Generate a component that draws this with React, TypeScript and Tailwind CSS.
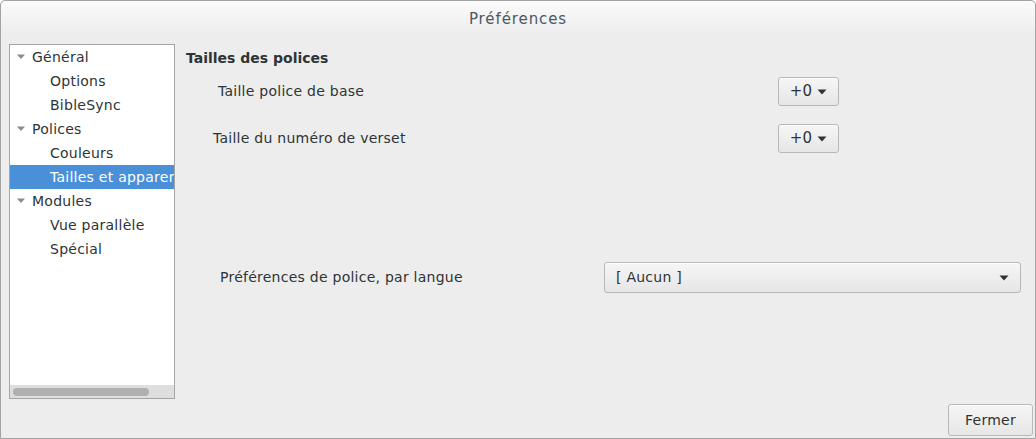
import React from "react";

const Caret = ({ className = "" }: { className?: string }) => (
  <svg width="10" height="6" viewBox="0 0 10 6" className={className}>
    <path d="M0.5 0.5 L9.5 0.5 L5 5.5 Z" fill="#2e3436" />
  </svg>
);

const Expander = () => (
  <svg width="10" height="6" viewBox="0 0 10 6" className="shrink-0">
    <path d="M1 0.5 L9 0.5 L5 5 Z" fill="#8a8a8a" />
  </svg>
);

const TreeParent = ({ label }: { label: string }) => (
  <div className="h-[24px] flex items-center pl-[6px] gap-[6px] text-[#2e3436]">
    <Expander />
    <span>{label}</span>
  </div>
);

const TreeChild = ({ label, selected = false }: { label: string; selected?: boolean }) => (
  <div
    className={
      "h-[24px] flex items-center pl-[40px] whitespace-nowrap " +
      (selected ? "bg-[#4a90d9] text-white" : "text-[#2e3436]")
    }
  >
    {label}
  </div>
);

const SmallButton = () => (
  <div className="w-[61px] h-[29px] rounded-[3px] border border-[#b8b8b8] bg-gradient-to-b from-[#f6f6f6] to-[#e6e6e6] flex items-center justify-center gap-[5px] text-[#2e3436] text-[15px] shadow-[inset_0_1px_0_#ffffff]">
    <span>+0</span>
    <Caret />
  </div>
);

export default function App() {
  return (
    <div
      className="w-[1036px] h-[439px] bg-[#ededed] border border-[#a3a3a3] rounded-t-[5px] flex flex-col overflow-hidden text-[14px] tracking-[0.25px]"
      style={{ fontFamily: '"DejaVu Sans", sans-serif' }}
    >
      <div className="h-[36px] shrink-0 bg-gradient-to-b from-[#fbfbfb] to-[#ececec] rounded-t-[5px] flex items-center justify-center">
        <span className="text-[#4b5961] text-[15px] tracking-[0.9px]">Préférences</span>
      </div>
      <div className="flex pt-[7px] pl-[8px] h-[362px] shrink-0">
        <div className="w-[166px] h-[355px] shrink-0 border border-[#a5a5a5] bg-white flex flex-col overflow-hidden">
          <div className="flex-1 overflow-hidden">
            <TreeParent label="Général" />
            <TreeChild label="Options" />
            <TreeChild label="BibleSync" />
            <TreeParent label="Polices" />
            <TreeChild label="Couleurs" />
            <TreeChild label="Tailles et apparence" selected />
            <TreeParent label="Modules" />
            <TreeChild label="Vue parallèle" />
            <TreeChild label="Spécial" />
          </div>
          <div className="h-[13px] bg-[#dedede] flex items-center pl-[3px]">
            <div className="w-[136px] h-[8px] rounded-full bg-[#b0b0b0]" />
          </div>
        </div>
        <div className="flex flex-col pl-[11px] flex-1">
          <div className="h-[28px] flex items-center font-bold text-[#2e3436] tracking-normal">Tailles des polices</div>
          <div className="mt-[5px] h-[29px] flex items-center">
            <div className="w-[592px] pl-[32px] text-[#2e3436]">Taille police de base</div>
            <SmallButton />
          </div>
          <div className="mt-[18px] h-[29px] flex items-center">
            <div className="w-[592px] pl-[27px] text-[#2e3436]">Taille du numéro de verset</div>
            <SmallButton />
          </div>
          <div className="mt-[109px] h-[31px] flex items-center">
            <div className="w-[418px] pl-[34px] text-[#2e3436]">Préférences de police, par langue</div>
            <div className="w-[417px] h-[31px] rounded-[3px] border border-[#b8b8b8] bg-gradient-to-b from-[#f6f6f6] to-[#e6e6e6] flex items-center justify-between pl-[11px] pr-[11px] text-[#2e3436] shadow-[inset_0_1px_0_#ffffff]">
              <span>[ Aucun ]</span>
              <Caret />
            </div>
          </div>
        </div>
      </div>
      <div className="flex justify-end pr-[2px] pt-[5px]">
        <div className="w-[85px] h-[32px] rounded-[3px] border border-[#b8b8b8] bg-gradient-to-b from-[#f6f6f6] to-[#e6e6e6] flex items-center justify-center text-[#2e3436] shadow-[inset_0_1px_0_#ffffff]">
          Fermer
        </div>
      </div>
    </div>
  );
}
